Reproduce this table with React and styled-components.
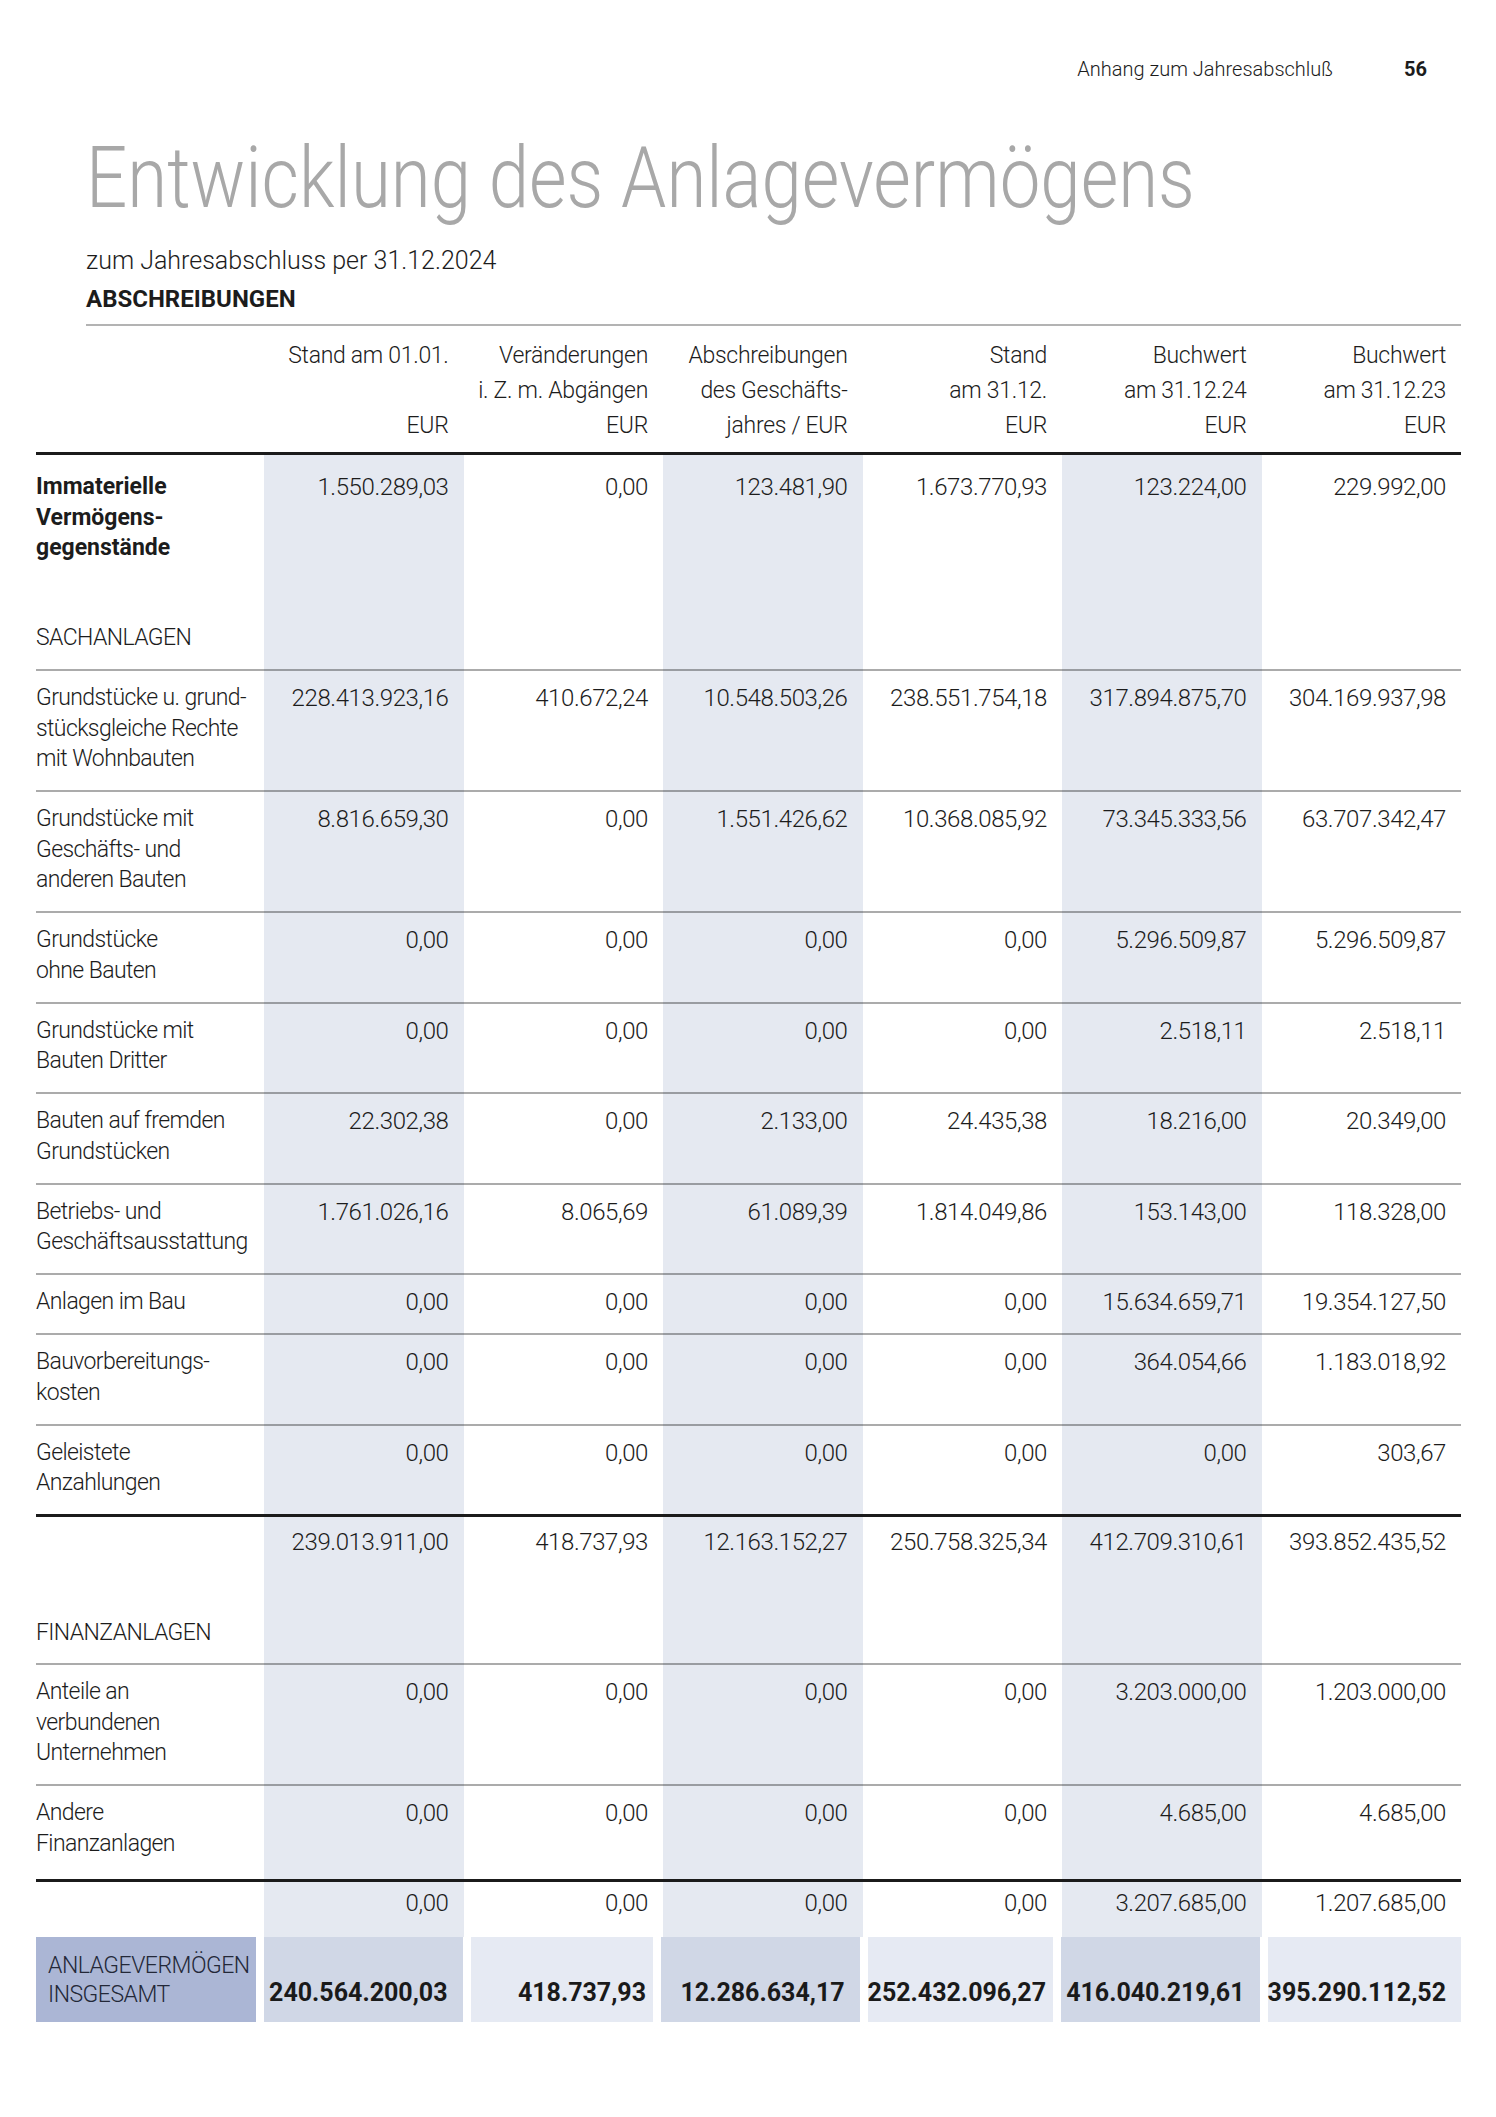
import React from "react";
import styled, { createGlobalStyle } from "styled-components";

const GlobalStyle = createGlobalStyle`
  html, body {
    margin: 0;
    padding: 0;
    background: #ffffff;
  }
  body {
    font-family: Roboto, "Liberation Sans", Arial, sans-serif;
    color: #1c1c1c;
  }
`;

const Page = styled.div`
  width: 1496px;
  min-height: 2117px;
  box-sizing: border-box;
  padding: 57px 35px 95px 36px;
`;

const TopBar = styled.div`
  display: flex;
  justify-content: flex-end;
  align-items: baseline;
  gap: 71px;
  padding-right: 34px;
  font-size: 20px;
  line-height: 24px;
  font-weight: 300;
`;

const PageNo = styled.span`
  font-weight: 700;
`;

const Heading = styled.div`
  margin-left: 50px;
`;

const Title = styled.h1`
  margin: 47px 0 0;
  font-size: 86px;
  line-height: 100px;
  font-weight: 300;
  color: #a8a8a8;
  white-space: nowrap;
  transform: scaleX(0.844);
  transform-origin: left center;
`;

const Subtitle = styled.div`
  margin-top: 18px;
  font-size: 25px;
  line-height: 30px;
  font-weight: 300;
`;

const Section = styled.div`
  margin-top: 8px;
  font-size: 24px;
  line-height: 30px;
  font-weight: 700;
`;

const Divider = styled.div`
  margin-top: 10px;
  height: 2px;
  background: #b3b3b3;
`;

const Grid = styled.div`
  display: grid;
  grid-template-columns: 228px repeat(6, 1fr);
  font-size: 23px;
  font-weight: 300;
`;

const HeadGrid = styled(Grid)`
  padding: 12px 0 9px;
  line-height: 35px;
  letter-spacing: -0.3px;
`;

const HeadCell = styled.div`
  text-align: right;
  padding-right: 15px;
  white-space: nowrap;
  min-height: 105px;
`;

const Line = styled.span`
  display: block;
  min-height: ${(p) => p.$h || "30.5px"};
`;

const rules = {
  gray: "2px solid rgba(0, 0, 0, 0.33)",
  black: "3px solid #1b1b1b",
};

const Cell = styled.div`
  box-sizing: border-box;
  padding: ${(p) => p.$top}px 15px ${(p) => p.$bottom}px 0;
  line-height: 30.5px;
  white-space: nowrap;
  text-align: ${(p) => (p.$label ? "left" : "right")};
  font-size: ${(p) => (p.$label ? "23px" : "24px")};
  letter-spacing: ${(p) => (p.$label ? (p.$bold ? "0" : "-0.6px") : "-0.4px")};
  font-weight: ${(p) => (p.$bold ? 700 : 300)};
  background: ${(p) => (p.$shade ? "#e5e9f1" : "transparent")};
  border-top: ${(p) => (p.$rule ? rules[p.$rule] : "none")};
`;

const TotalGrid = styled(Grid)`
  height: 85px;
`;

const TotalLabel = styled.div`
  margin-right: 8px;
  padding: 14px 0 0 12px;
  background: #abb6d5;
  color: #232838;
  font-size: 23px;
  line-height: 29px;
  letter-spacing: -0.5px;
  font-weight: 300;
  white-space: nowrap;
`;

const TotalCell = styled.div`
  display: flex;
  align-items: flex-end;
  justify-content: flex-end;
  padding: 0 ${(p) => (p.$light && !p.$last ? 7 : 15)}px 15px 0;
  margin: ${(p) => (p.$light ? (p.$last ? "0 0 0 8px" : "0 8px") : "0")};
  background: ${(p) => (p.$light ? "#e6eaf3" : "#d0d7e6")};
  font-size: 25px;
  line-height: 28px;
  font-weight: 700;
  color: #1a1a1a;
`;

const headers = [
  ["Stand am 01.01.", "", "EUR"],
  ["Veränderungen", "i. Z. m. Abgängen", "EUR"],
  ["Abschreibungen", "des Geschäfts-", "jahres / EUR"],
  ["Stand", "am 31.12.", "EUR"],
  ["Buchwert", "am 31.12.24", "EUR"],
  ["Buchwert", "am 31.12.23", "EUR"],
];

const rows = [
  {
    label: ["Immaterielle", "Vermögens-", "gegenstände"],
    bold: true,
    rule: "black",
    top: 17,
    bottom: 0,
    values: ["1.550.289,03", "0,00", "123.481,90", "1.673.770,93", "123.224,00", "229.992,00"],
  },
  { label: ["SACHANLAGEN"], top: 59.5, bottom: 15.5 },
  {
    label: ["Grundstücke u. grund-", "stücksgleiche Rechte", "mit Wohnbauten"],
    values: ["228.413.923,16", "410.672,24", "10.548.503,26", "238.551.754,18", "317.894.875,70", "304.169.937,98"],
  },
  {
    label: ["Grundstücke mit", "Geschäfts- und", "anderen Bauten"],
    values: ["8.816.659,30", "0,00", "1.551.426,62", "10.368.085,92", "73.345.333,56", "63.707.342,47"],
  },
  {
    label: ["Grundstücke", "ohne Bauten"],
    values: ["0,00", "0,00", "0,00", "0,00", "5.296.509,87", "5.296.509,87"],
  },
  {
    label: ["Grundstücke mit", "Bauten Dritter"],
    values: ["0,00", "0,00", "0,00", "0,00", "2.518,11", "2.518,11"],
  },
  {
    label: ["Bauten auf fremden", "Grundstücken"],
    values: ["22.302,38", "0,00", "2.133,00", "24.435,38", "18.216,00", "20.349,00"],
  },
  {
    label: ["Betriebs- und", "Geschäftsausstattung"],
    values: ["1.761.026,16", "8.065,69", "61.089,39", "1.814.049,86", "153.143,00", "118.328,00"],
  },
  {
    label: ["Anlagen im Bau"],
    values: ["0,00", "0,00", "0,00", "0,00", "15.634.659,71", "19.354.127,50"],
  },
  {
    label: ["Bauvorbereitungs-", "kosten"],
    values: ["0,00", "0,00", "0,00", "0,00", "364.054,66", "1.183.018,92"],
  },
  {
    label: ["Geleistete", "Anzahlungen"],
    values: ["0,00", "0,00", "0,00", "0,00", "0,00", "303,67"],
  },
  {
    label: [""],
    rule: "black",
    top: 10,
    bottom: 0,
    values: ["239.013.911,00", "418.737,93", "12.163.152,27", "250.758.325,34", "412.709.310,61", "393.852.435,52"],
  },
  { label: ["FINANZANLAGEN"], top: 60.5, bottom: 14.5 },
  {
    label: ["Anteile an", "verbundenen", "Unternehmen"],
    values: ["0,00", "0,00", "0,00", "0,00", "3.203.000,00", "1.203.000,00"],
  },
  {
    label: ["Andere", "Finanzanlagen"],
    bottom: 20,
    values: ["0,00", "0,00", "0,00", "0,00", "4.685,00", "4.685,00"],
  },
  {
    label: [""],
    rule: "black",
    top: 6,
    bottom: 18.5,
    values: ["0,00", "0,00", "0,00", "0,00", "3.207.685,00", "1.207.685,00"],
  },
];

const totals = ["240.564.200,03", "418.737,93", "12.286.634,17", "252.432.096,27", "416.040.219,61", "395.290.112,52"];

function Row({ row }) {
  const rule = row.rule || (row.values ? "gray" : null);
  const top = row.top ?? 12;
  const bottom = row.bottom ?? 15.5;
  const values = row.values || ["", "", "", "", "", ""];
  return (
    <Grid>
      <Cell $label $bold={row.bold} $rule={rule} $top={top} $bottom={bottom}>
        {row.label.map((l, i) => (
          <Line key={i}>{l}</Line>
        ))}
      </Cell>
      {values.map((v, i) => (
        <Cell key={i} $shade={i % 2 === 0} $rule={rule} $top={top} $bottom={bottom}>
          {v}
        </Cell>
      ))}
    </Grid>
  );
}

export default function App() {
  return (
    <>
      <GlobalStyle />
      <Page>
        <TopBar>
          <span>Anhang zum Jahresabschluß</span>
          <PageNo>56</PageNo>
        </TopBar>
        <Heading>
          <Title>Entwicklung des Anlagevermögens</Title>
          <Subtitle>zum Jahresabschluss per 31.12.2024</Subtitle>
          <Section>ABSCHREIBUNGEN</Section>
          <Divider />
        </Heading>
        <HeadGrid>
          <div />
          {headers.map((h, i) => (
            <HeadCell key={i}>
              {h.map((l, j) => (
                <Line key={j} $h="35px">
                  {l}
                </Line>
              ))}
            </HeadCell>
          ))}
        </HeadGrid>
        {rows.map((r, i) => (
          <Row key={i} row={r} />
        ))}
        <TotalGrid>
          <TotalLabel>
            ANLAGEVERMÖGEN
            <br />
            INSGESAMT
          </TotalLabel>
          {totals.map((t, i) => (
            <TotalCell key={i} $light={i % 2 === 1} $last={i === 5}>
              {t}
            </TotalCell>
          ))}
        </TotalGrid>
      </Page>
    </>
  );
}
